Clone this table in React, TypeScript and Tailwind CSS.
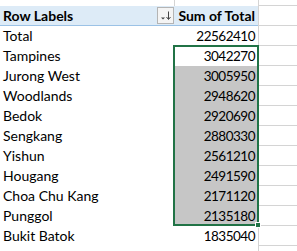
import React from "react";

const rows: [string, string][] = [
  ["Tampines", "3042270"],
  ["Jurong West", "3005950"],
  ["Woodlands", "2948620"],
  ["Bedok", "2920690"],
  ["Sengkang", "2880330"],
  ["Yishun", "2561210"],
  ["Hougang", "2491590"],
  ["Choa Chu Kang", "2171120"],
  ["Punggol", "2135180"],
];

const font = { fontFamily: "Lato, 'Open Sans', sans-serif" };

function FilterButton() {
  return (
    <div className="w-[17px] h-[17px] border border-[#b4b4b4] bg-[#f4f4f4] flex items-center justify-center">
      <svg width="13" height="11" viewBox="0 0 13 11">
        <path d="M2 7.5 L6 7.5 L4 9.5 Z" fill="#444" />
        <path d="M9.5 1.5 V9" stroke="#444" strokeWidth="1" />
        <path d="M7.5 7 L9.5 9.5 L11.5 7" stroke="#444" strokeWidth="1" fill="none" />
      </svg>
    </div>
  );
}

function Row({
  label,
  value,
  gray,
  bold,
}: {
  label: string;
  value: string;
  gray?: boolean;
  bold?: boolean;
}) {
  return (
    <div className="flex h-[20px]">
      <div className="w-[175px] h-[20px] bg-white pl-[3px] text-[14px] leading-[20px] text-black">
        {label}
      </div>
      <div
        className={`w-[83px] h-[20px] pr-[3px] text-right text-[13.5px] leading-[20px] tracking-[-0.5px] text-black ${
          gray ? "bg-[#c6c6c6]" : "bg-white"
        }`}
      >
        {value}
      </div>
      <div className="w-[1px] h-[20px] bg-[#d4d4d4]" />
      <div className="flex-1 h-[20px] border-b border-[#d4d4d4]" />
    </div>
  );
}

export default function App() {
  return (
    <div className="relative w-[297px] h-[251px] bg-white overflow-hidden" style={font}>
      {/* top partial row */}
      <div className="flex h-[6px]">
        <div className="w-[174px] h-[6px]" />
        <div className="w-[1px] h-[6px] bg-[#d4d4d4]" />
        <div className="w-[83px] h-[6px]" />
        <div className="w-[1px] h-[6px] bg-[#d4d4d4]" />
        <div className="flex-1 h-[6px] border-b border-[#d4d4d4]" />
      </div>
      {/* header */}
      <div className="flex h-[20px]">
        <div className="w-[258px] h-[20px] bg-[#ddebf7] border-b border-[#9bc2e6] flex items-center">
          <div className="w-[157px] pl-[3px] text-[14px] font-bold leading-[19px] text-black">
            Row Labels
          </div>
          <FilterButton />
          <div className="flex-1 text-right pr-[3px] text-[14px] font-bold leading-[19px] text-black">
            Sum of Total
          </div>
        </div>
        <div className="w-[1px] h-[20px] bg-[#d4d4d4]" />
        <div className="flex-1 h-[20px] border-b border-[#d4d4d4]" />
      </div>
      <Row label="Total" value="22562410" />
      {rows.map(([l, v], i) => (
        <Row key={l} label={l} value={v} gray={i > 0} />
      ))}
      <Row label="Bukit Batok" value="1835040" />
      <div className="flex h-[6px]">
        <div className="w-[258px] h-[6px]" />
        <div className="w-[1px] h-[6px] bg-[#d4d4d4]" />
        <div className="flex-1" />
      </div>
      {/* selection border */}
      <div className="absolute left-[173px] top-[45px] w-[86px] h-[181px] border-2 border-[#217346] pointer-events-none" />
      <div className="absolute left-[255px] top-[222px] w-[6px] h-[6px] bg-[#217346] border border-white" />
    </div>
  );
}
